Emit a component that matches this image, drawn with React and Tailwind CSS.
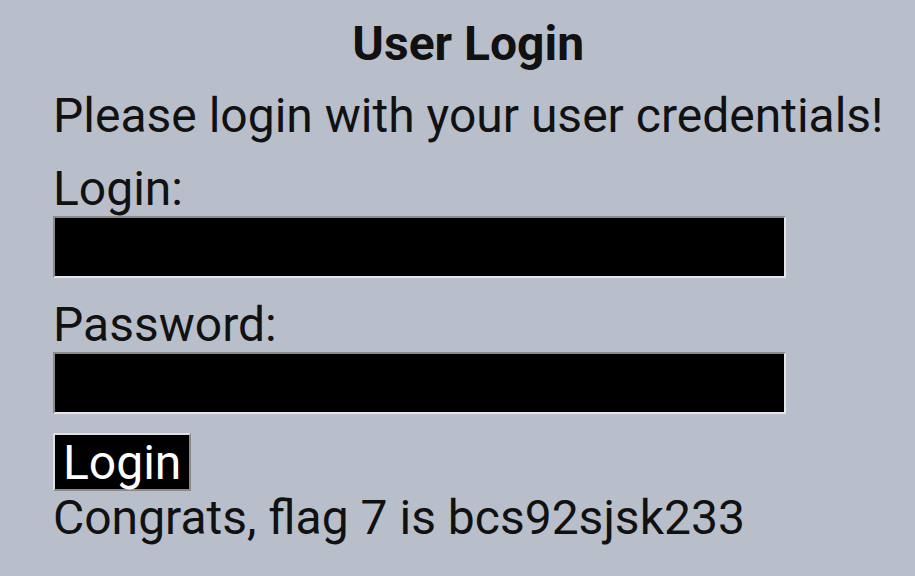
export default function App() {
  return (
    <div className="min-h-[576px] w-full bg-[#b8bfcb] text-[#111111] font-['Roboto',sans-serif] overflow-hidden">
      <div className="ml-[53px] w-fit pt-[16px] flex flex-col">
        <h1 className="text-center font-bold text-[48px] leading-[55px]">User Login</h1>
        <p className="mt-[17px] text-[48px] leading-[55px] whitespace-nowrap">Please login with your user credentials!</p>
        <label className="mt-[18px] text-[48px] leading-[55px]">Login:</label>
        <div className="w-[733px] h-[62px] bg-black border-2 border-t-[#8a8a8a] border-l-[#8a8a8a] border-b-[#e6e6e6] border-r-[#e6e6e6]"></div>
        <label className="mt-[19px] text-[48px] leading-[55px]">Password:</label>
        <div className="w-[733px] h-[62px] bg-black border-2 border-t-[#8a8a8a] border-l-[#8a8a8a] border-b-[#e6e6e6] border-r-[#e6e6e6]"></div>
        <div className="mt-[19px] flex">
          <button className="h-[58px] px-[8px] bg-black text-white text-[48px] leading-[55px] border-2 border-t-[#e0e0e0] border-l-[#e0e0e0] border-b-[#8a8a8a] border-r-[#8a8a8a]">Login</button>
        </div>
        <p className="-mt-[1px] text-[48px] leading-[55px] whitespace-nowrap">Congrats, flag 7 is bcs92sjsk233</p>
      </div>
    </div>
  );
}
